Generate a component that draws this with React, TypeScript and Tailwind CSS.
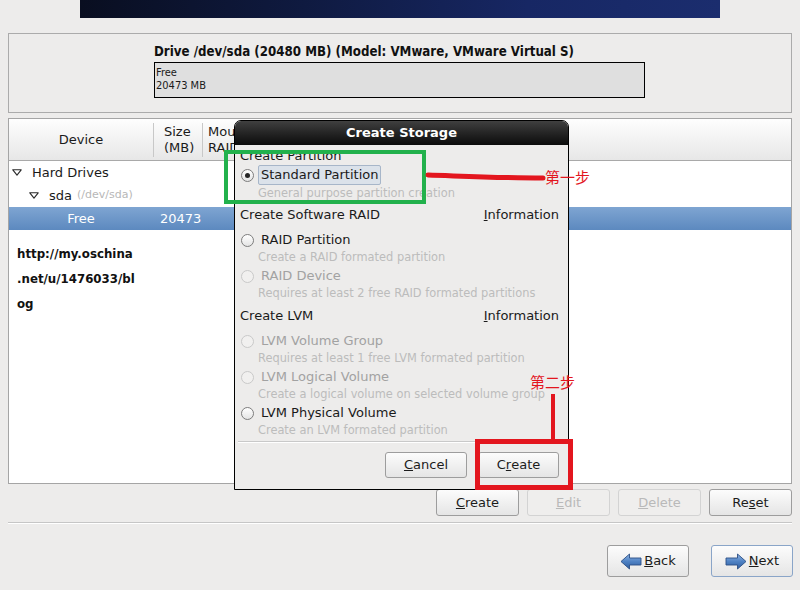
import React from "react";

const Radio = ({ checked = false, disabled = false }: { checked?: boolean; disabled?: boolean }) => (
  <span
    className={`flex h-[13px] w-[13px] shrink-0 items-center justify-center rounded-full border ${
      disabled ? "border-[#c9c9c9] bg-[#f1f0ef]" : "border-[#7d7d7d] bg-gradient-to-b from-white to-[#e4e4e4]"
    }`}
  >
    {checked && <span className="h-[5px] w-[5px] rounded-full bg-[#262626]" />}
  </span>
);

const Btn = ({
  children,
  disabled = false,
  className = "",
}: {
  children: React.ReactNode;
  disabled?: boolean;
  className?: string;
}) => (
  <div
    className={`flex items-center justify-center rounded-[3px] border text-[13px] ${
      disabled
        ? "border-[#d3d3d3] bg-[#efeeed] text-[#b9b9b9]"
        : "border-[#9d9d9d] bg-gradient-to-b from-[#fcfcfc] to-[#e5e5e5] text-[#1c1c1c]"
    } ${className}`}
  >
    {children}
  </div>
);

const Tri = ({ className = "" }: { className?: string }) => (
  <svg width="10" height="7" viewBox="0 0 10 7" className={className}>
    <path d="M0.8 0.8 L9.2 0.8 L5 6.2 Z" fill="none" stroke="#2a2a2a" strokeWidth="1.1" strokeLinejoin="round" />
  </svg>
);

const Arrow = ({ dir }: { dir: "left" | "right" }) => (
  <svg width="22" height="17" viewBox="0 0 22 17">
    <defs>
      <linearGradient id={`ag-${dir}`} x1="0" y1="0" x2="0" y2="1">
        <stop offset="0" stopColor="#8db3e2" />
        <stop offset="0.5" stopColor="#4f82c4" />
        <stop offset="1" stopColor="#2f5e9f" />
      </linearGradient>
    </defs>
    {dir === "left" ? (
      <path d="M1 8.5 L9.5 1 L9.5 5 L21 5 L21 12 L9.5 12 L9.5 16 Z" fill={`url(#ag-${dir})`} stroke="#2b4f86" strokeWidth="0.9" strokeLinejoin="round" />
    ) : (
      <path d="M21 8.5 L12.5 1 L12.5 5 L1 5 L1 12 L12.5 12 L12.5 16 Z" fill={`url(#ag-${dir})`} stroke="#2b4f86" strokeWidth="0.9" strokeLinejoin="round" />
    )}
  </svg>
);

export default function App() {
  return (
    <div className="relative h-[590px] w-[800px] overflow-hidden bg-[#edeceb] font-['DejaVu_Sans','Noto_Sans',sans-serif] text-[#1a1a1a]">
      {/* banner */}
      <div className="ml-[80px] h-[18px] w-[640px] bg-[linear-gradient(90deg,#090e20_0%,#0f1a40_35%,#172764_70%,#1b2d6e_100%)]" />

      {/* drive panel */}
      <div className="mx-[8px] mt-[15px] h-[80px] border border-[#ababab] pl-[145px] pt-[9px]">
        <div className="font-['DejaVu_Sans_Condensed','DejaVu_Sans',sans-serif] text-[13.2px] font-bold leading-[18px] text-[#111]">
          Drive /dev/sda (20480 MB) (Model: VMware, VMware Virtual S)
        </div>
        <div className="mt-[1px] h-[36px] w-[491px] border border-black bg-[#dfdfdf] pl-[1px] pt-[3px] font-['DejaVu_Sans_Condensed','DejaVu_Sans',sans-serif] text-[11px] leading-[13px]">
          <div>Free</div>
          <div>20473 MB</div>
        </div>
      </div>

      {/* tree panel */}
      <div className="mx-[8px] mt-[5px] h-[366px] border border-[#a5a5a5] bg-white">
        <div className="flex h-[42px] border-b border-[#a9a9a9] bg-gradient-to-b from-[#fefefe] to-[#e7e7e7] text-[13px]">
          <div className="flex w-[144px] items-center justify-center">Device</div>
          <div className="mt-[4px] h-[34px] w-px bg-[#c8c8c8]" />
          <div className="flex w-[48px] flex-col justify-center pl-[10px] leading-[16px]">
            <span>Size</span>
            <span>(MB)</span>
          </div>
          <div className="mt-[4px] h-[34px] w-px bg-[#c8c8c8]" />
          <div className="flex w-[31px] flex-col justify-center overflow-hidden whitespace-nowrap pl-[5px] leading-[16px]">
            <span>Mou</span>
            <span>RAID</span>
          </div>
        </div>
        <div className="flex h-[23px] items-center pl-[3px] text-[13px]">
          <Tri />
          <span className="ml-[10px]">Hard Drives</span>
        </div>
        <div className="flex h-[23px] items-center pl-[20px] text-[13px]">
          <Tri />
          <span className="ml-[10px]">sda</span>
          <span className="ml-[5px] text-[11px] text-[#b7b7b7]">(/dev/sda)</span>
        </div>
        <div className="flex h-[23px] items-center bg-gradient-to-b from-[#7fa5d2] to-[#5c89bf] text-[13px] text-white">
          <span className="w-[144px] text-center">Free</span>
          <span className="pl-[7px]">20473</span>
        </div>
        <div className="mt-[12px] pl-[8px] text-[11.8px] font-bold leading-[25px] text-[#111]">
          <div>http://my.oschina</div>
          <div>.net/u/1476033/bl</div>
          <div>og</div>
        </div>
      </div>

      {/* action buttons */}
      <div className="mt-[5px] flex justify-end gap-[8px] pr-[8px]">
        <Btn className="h-[27px] w-[83px]">
          <span className="underline">C</span>reate
        </Btn>
        <Btn disabled className="h-[27px] w-[83px]">
          <span className="underline">E</span>dit
        </Btn>
        <Btn disabled className="h-[27px] w-[83px]">
          <span className="underline">D</span>elete
        </Btn>
        <Btn className="h-[27px] w-[83px]">
          Re<span className="underline">s</span>et
        </Btn>
      </div>

      <div className="mx-[8px] mt-[6px] border-t border-b border-t-[#c6c6c6] border-b-white" />

      {/* nav buttons */}
      <div className="mt-[21px] flex justify-end gap-[22px] pr-[7px]">
        <Btn className="h-[32px] w-[82px] gap-[2px]">
          <Arrow dir="left" />
          <span>
            <span className="underline">B</span>ack
          </span>
        </Btn>
        <div className="flex h-[32px] w-[82px] items-center justify-center gap-[2px] rounded-[3px] border border-[#8aa5c8] bg-gradient-to-b from-[#fcfcfc] to-[#e5e5e5] text-[13px]">
          <Arrow dir="right" />
          <span>
            <span className="underline">N</span>ext
          </span>
        </div>
      </div>

      {/* dialog */}
      <div className="absolute left-[234px] top-[120px] flex h-[370px] w-[335px] flex-col rounded-t-[7px] border border-black bg-[#edeceb]">
        <div className="flex h-[24px] shrink-0 items-center justify-center rounded-t-[6px] bg-gradient-to-b from-[#404040] to-[#0c0c0c] text-[13px] font-bold text-white">
          Create Storage
        </div>
        <div className="flex flex-col pl-[5px] pr-[9px] text-[13px]">
          <div className="flex h-[20px] items-center pt-[1px]">Create Partition</div>
          <div className="flex h-[20px] items-center">
            <span className="ml-[1px]">
              <Radio checked />
            </span>
            <span className="ml-[4px] flex h-[20px] items-center rounded-[2px] border border-[#a7b6c9] bg-[#dbe2ea] px-[2px]">
              Standard Partition
            </span>
          </div>
          <div className="flex h-[18px] items-center pl-[18px] text-[11.4px] text-[#bcbcbc]">General purpose partition creation</div>

          <div className="mt-[3px] flex h-[18px] items-center justify-between">
            <span>Create Software RAID</span>
            <span>
              <span className="underline">I</span>nformation
            </span>
          </div>
          <div className="mt-[7px] flex h-[18px] items-center">
            <span className="ml-[1px]">
              <Radio />
            </span>
            <span className="ml-[7px]">RAID Partition</span>
          </div>
          <div className="flex h-[18px] items-center pl-[18px] text-[11.4px] text-[#bcbcbc]">Create a RAID formated partition</div>
          <div className="flex h-[18px] items-center">
            <span className="ml-[1px]">
              <Radio disabled />
            </span>
            <span className="ml-[7px] text-[#a2a2a2]">RAID Device</span>
          </div>
          <div className="flex h-[18px] items-center pl-[18px] text-[11.4px] text-[#bcbcbc]">Requires at least 2 free RAID formated partitions</div>

          <div className="mt-[4px] flex h-[18px] items-center justify-between">
            <span>Create LVM</span>
            <span>
              <span className="underline">I</span>nformation
            </span>
          </div>
          <div className="mt-[7px] flex h-[18px] items-center">
            <span className="ml-[1px]">
              <Radio disabled />
            </span>
            <span className="ml-[7px] text-[#a2a2a2]">LVM Volume Group</span>
          </div>
          <div className="flex h-[18px] items-center pl-[18px] text-[11.4px] text-[#bcbcbc]">Requires at least 1 free LVM formated partition</div>
          <div className="flex h-[18px] items-center">
            <span className="ml-[1px]">
              <Radio disabled />
            </span>
            <span className="ml-[7px] text-[#a2a2a2]">LVM Logical Volume</span>
          </div>
          <div className="flex h-[18px] items-center whitespace-nowrap pl-[18px] text-[11.4px] text-[#bcbcbc]">Create a logical volume on selected volume group</div>
          <div className="flex h-[18px] items-center">
            <span className="ml-[1px]">
              <Radio />
            </span>
            <span className="ml-[7px]">LVM Physical Volume</span>
          </div>
          <div className="flex h-[18px] items-center pl-[18px] text-[11.4px] text-[#bcbcbc]">Create an LVM formated partition</div>
        </div>
        <div className="mx-[3px] mt-[1px] border-t border-b border-t-[#c9c9c9] border-b-white" />
        <div className="mt-[9px] flex justify-end gap-[11px] pr-[9px]">
          <Btn className="h-[26px] w-[82px]">
            <span className="underline">C</span>ancel
          </Btn>
          <Btn className="h-[26px] w-[81px]">
            C<span className="underline">r</span>eate
          </Btn>
        </div>
      </div>

      {/* annotations */}
      <div className="absolute left-[224px] top-[150px] h-[54px] w-[202px] border-[4px] border-[#22b14c]" />
      <svg className="pointer-events-none absolute left-0 top-0" width="800" height="590" viewBox="0 0 800 590">
        <path d="M428 175 C 460 176, 500 178, 543 178" fill="none" stroke="#e3161e" strokeWidth="5" strokeLinecap="round" />
        <path d="M553 394 L553 441" fill="none" stroke="#e3161e" strokeWidth="4" />
        <rect x="477.5" y="441.5" width="93" height="46" fill="none" stroke="#e3161e" strokeWidth="5" />
      </svg>
      <div className="absolute left-[545px] top-[168px] font-['Noto_Sans_CJK_SC',sans-serif] text-[15px] leading-[18px] text-[#e3161e]">
        第一步
      </div>
      <div className="absolute left-[530px] top-[373px] font-['Noto_Sans_CJK_SC',sans-serif] text-[15px] leading-[18px] text-[#e3161e]">
        第二步
      </div>
    </div>
  );
}
